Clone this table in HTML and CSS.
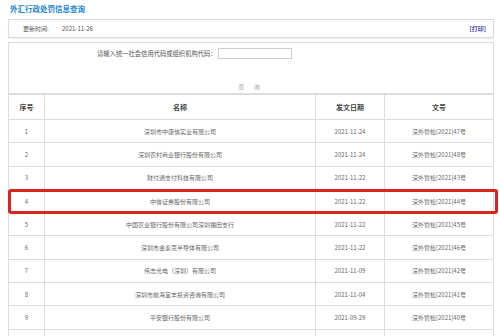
FILE: index.html
```html
<!DOCTYPE html>
<html lang="zh">
<head>
<meta charset="utf-8">
<title>外汇行政处罚信息查询</title>
<link rel="stylesheet" href="styles.css">
</head>
<body>
<div class="page">
<h1 class="title">外汇行政处罚信息查询</h1>

<div class="update-bar">
<span class="update-label">更新时间:</span>
<span class="update-date">2021-11-26</span>
<a class="print" href="#">[打印]</a>
</div>

<div class="search-box">
<div class="search-row">
<label class="search-label" for="code">请输入统一社会信用代码或组织机构代码：</label>
<input class="search-input" id="code" type="text">
</div>
<div class="search-btn">查 询</div>
</div>

<div class="result">
<table class="list">
<thead>
<tr><th class="c-no">序号</th><th class="c-name">名称</th><th class="c-date">发文日期</th><th class="c-doc">文号</th></tr>
</thead>
<tbody>
<tr><td>1</td><td>深圳市中康信实业有限公司</td><td>2021-11-24</td><td>深外管检[2021]47号</td></tr>
<tr><td>2</td><td>深圳农村商业银行股份有限公司</td><td>2021-11-24</td><td>深外管检[2021]48号</td></tr>
<tr><td>3</td><td>财付通支付科技有限公司</td><td>2021-11-22</td><td>深外管检[2021]43号</td></tr>
<tr><td>4</td><td>中信证券股份有限公司</td><td>2021-11-22</td><td>深外管检[2021]44号</td></tr>
<tr><td>5</td><td>中国农业银行股份有限公司深圳福田支行</td><td>2021-11-22</td><td>深外管检[2021]45号</td></tr>
<tr><td>6</td><td>深圳市金泰克半导体有限公司</td><td>2021-11-22</td><td>深外管检[2021]46号</td></tr>
<tr><td>7</td><td>伟志光电（深圳）有限公司</td><td>2021-11-09</td><td>深外管检[2021]42号</td></tr>
<tr><td>8</td><td>深圳市前海宜丰投资咨询有限公司</td><td>2021-11-04</td><td>深外管检[2021]41号</td></tr>
<tr><td>9</td><td>平安银行股份有限公司</td><td>2021-09-29</td><td>深外管检[2021]40号</td></tr>
<tr><td></td><td></td><td></td><td></td></tr>
</tbody>
</table>
<div class="mark"></div>
</div>
</div>
</body>
</html>
```

FILE: styles.css
```css
/* 外汇行政处罚信息查询 */

body
{ margin: 0;
background: #fff;
font-family: "Noto Sans CJK SC", "Noto Sans", sans-serif;
color: #666;
}

.page
{ padding: 0 5px 0 8px;
}

h1.title
{ margin: 0;
padding: 4px 0 0 2px;
height: 19px;
box-sizing: border-box;
font-size: 7.5px;
line-height: 10px;
font-weight: bold;
color: #2384d2;
}

/* Update bar */

div.update-bar
{ display: flex;
align-items: center;
height: 19px;
box-sizing: border-box;
border: 1px solid #dcdcdc;
box-shadow: 0 1px 1px #eee;
padding: 0 7px 0 14px;
font-size: 6px;
}

span.update-label
{ width: 39px;
color: #555;
}

span.update-date
{ color: #555;
}

a.print
{ margin-left: auto;
color: #4545a8;
text-decoration: none;
font-size: 6px;
font-weight: bold;
}

/* Search */

div.search-box
{ margin-top: 4px;
height: 52px;
box-sizing: border-box;
border: 1px solid #dcdcdc;
padding-top: 5px;
}

div.search-row
{ display: flex;
align-items: center;
padding-left: 88px;
}

label.search-label
{ font-size: 6.3px;
color: #555;
}

input.search-input
{ width: 74px;
height: 11px;
box-sizing: border-box;
margin: 0 0 0 1px;
padding: 0;
border: 1px solid #ccc;
}

div.search-btn
{ margin-top: 23px;
text-align: center;
font-size: 6px;
color: #aaa;
letter-spacing: 4px;
}

/* Result list */

div.result
{ position: relative;
}

table.list
{ width: 100%;
border-collapse: collapse;
table-layout: fixed;
}

table.list th
{ height: 24px;
border: 1px solid #dcdcdc;
font-size: 7px;
font-weight: bold;
color: #444;
text-align: center;
padding: 0;
}

table.list td
{ height: 22.3px;
border: 1px solid #dcdcdc;
font-size: 6px;
text-align: center;
padding: 0;
}

th.c-no { width: 35px; }
th.c-name { width: 270px; }
th.c-date { width: 68px; }

div.mark
{ position: absolute;
left: 0;
top: 95px;
width: 490px;
height: 25px;
box-sizing: border-box;
border: 3px solid #d9251d;
border-radius: 3px;
}
```
